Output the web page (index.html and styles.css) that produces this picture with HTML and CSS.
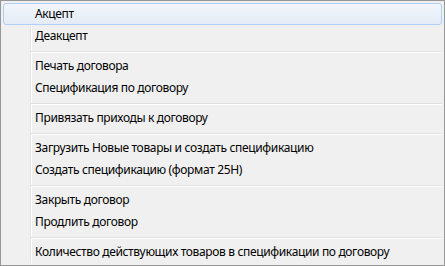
FILE: index.html
```html
<!DOCTYPE html>
<html>
  <head>
    <title>Menu</title>
    <link rel="stylesheet" href="styles.css">
  </head>
  <body>
    <div class="menu">
      <ul class="menu-list">
        <li class="menu-item active">Акцепт</li>
        <li class="menu-item">Деакцепт</li>
        <li class="menu-sep"></li>
        <li class="menu-item">Печать договора</li>
        <li class="menu-item">Спецификация по договору</li>
        <li class="menu-sep"></li>
        <li class="menu-item">Привязать приходы к договору</li>
        <li class="menu-sep"></li>
        <li class="menu-item">Загрузить Новые товары и создать спецификацию</li>
        <li class="menu-item">Создать спецификацию (формат 25Н)</li>
        <li class="menu-sep"></li>
        <li class="menu-item">Закрыть договор</li>
        <li class="menu-item">Продлить договор</li>
        <li class="menu-sep"></li>
        <li class="menu-item">Количество действующих товаров в спецификации по договору</li>
      </ul>
    </div>
  </body>
</html>
```
FILE: styles.css
```css
/* Context menu */
body {
  margin: 0;
}

.menu {
  width: 445px;
  height: 266px;
  box-sizing: border-box;
  border: 1px solid #979797;
  background-color: #f0f0f0;
  padding: 2px;
  font-family: "Noto Sans", "Open Sans", sans-serif;
  font-size: 12px;
  letter-spacing: -0.35px;
  color: #000;
}

.menu-list {
  list-style: none;
  margin: 0;
  padding: 0;
  height: 100%;
  background: linear-gradient(to right, transparent 27px, #e2e3e3 27px, #e2e3e3 28px, #fff 28px, #fff 29px, transparent 29px);
}

.menu-item {
  height: 22px;
  line-height: 22px;
  padding-left: 32px;
  box-sizing: border-box;
  white-space: nowrap;
}

.menu-item.active {
  border: 1px solid #aecff7;
  border-radius: 3px;
  line-height: 20px;
  padding-left: 31px;
  background: linear-gradient(to bottom, #f2f6fb, #e4ecf7);
}

.menu-sep {
  height: 8px;
  margin-left: 28px;
  background: linear-gradient(to bottom, transparent 4px, #e0e0e0 4px, #e0e0e0 5px, #fff 5px, #fff 6px, transparent 6px);
}
```
